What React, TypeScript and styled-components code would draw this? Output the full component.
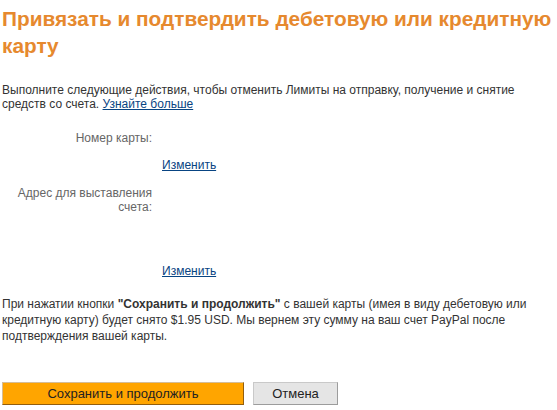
import React from 'react'
import styled, { createGlobalStyle } from 'styled-components'

const GlobalStyle = createGlobalStyle`
  body {
    margin: 0;
    background: #fff;
    font-family: Arial, "Liberation Sans", sans-serif;
  }
`

const Page = styled.div`
  padding: 0 2px;
  color: #333;
  font-size: 12px;
`

const Title = styled.h1`
  margin: 5px -2px 0 0;
  font-size: 20.8px;
  line-height: 27px;
  font-weight: bold;
  color: #e6892e;
`

const Intro = styled.p`
  margin: 24px 0 0;
  line-height: 14px;
`

const Link = styled.a`
  color: #084482;
  text-decoration: underline;
`

const Form = styled.div`
  display: grid;
  grid-template-columns: 150px 1fr;
  column-gap: 10px;
  margin-top: 20px;
`

const Label = styled.div`
  text-align: right;
  color: #666;
  line-height: 14px;
`

const Value = styled.div<{ $height: number }>`
  min-height: ${({ $height }) => $height}px;
  line-height: 14px;
`

const Spacer = styled.div``

const Note = styled.p`
  margin: 18px 0 0;
  line-height: 16px;
`

const Actions = styled.div`
  display: flex;
  gap: 9px;
  margin-top: 38px;
`

const Button = styled.button<{ $primary?: boolean }>`
  height: 23px;
  padding: 0;
  font-family: Arial, "Liberation Sans", sans-serif;
  font-size: 13px;
  color: #222;
  cursor: pointer;
  width: ${({ $primary }) => ($primary ? '242px' : '85px')};
  background: ${({ $primary }) => ($primary ? '#ffa500' : '#e5e5e5')};
  border: 1px solid ${({ $primary }) => ($primary ? '#d5bd98' : '#c9c9c9')};
  border-right-color: ${({ $primary }) => ($primary ? '#935e0d' : '#9c9c9c')};
  border-bottom-color: ${({ $primary }) => ($primary ? '#935e0d' : '#9c9c9c')};
`

export default function App() {
  return (
    <Page>
      <GlobalStyle />
      <Title>Привязать и подтвердить дебетовую или кредитную карту</Title>
      <Intro>
        Выполните следующие действия, чтобы отменить Лимиты на отправку, получение и снятие
        средств со счета. <Link href="#">Узнайте больше</Link>
      </Intro>

      <Form>
        <Label>Номер карты:</Label>
        <Value $height={27} />
        <Spacer />
        <Value $height={28}>
          <Link href="#">Изменить</Link>
        </Value>
        <Label>Адрес для выставления счета:</Label>
        <Value $height={78} />
        <Spacer />
        <Value $height={14}>
          <Link href="#">Изменить</Link>
        </Value>
      </Form>

      <Note>
        При нажатии кнопки <b>"Сохранить и продолжить"</b> с вашей карты (имея в виду дебетовую или
        кредитную карту) будет снято $1.95 USD. Мы вернем эту сумму на ваш счет PayPal после
        подтверждения вашей карты.
      </Note>

      <Actions>
        <Button $primary>Сохранить и продолжить</Button>
        <Button>Отмена</Button>
      </Actions>
    </Page>
  )
}
